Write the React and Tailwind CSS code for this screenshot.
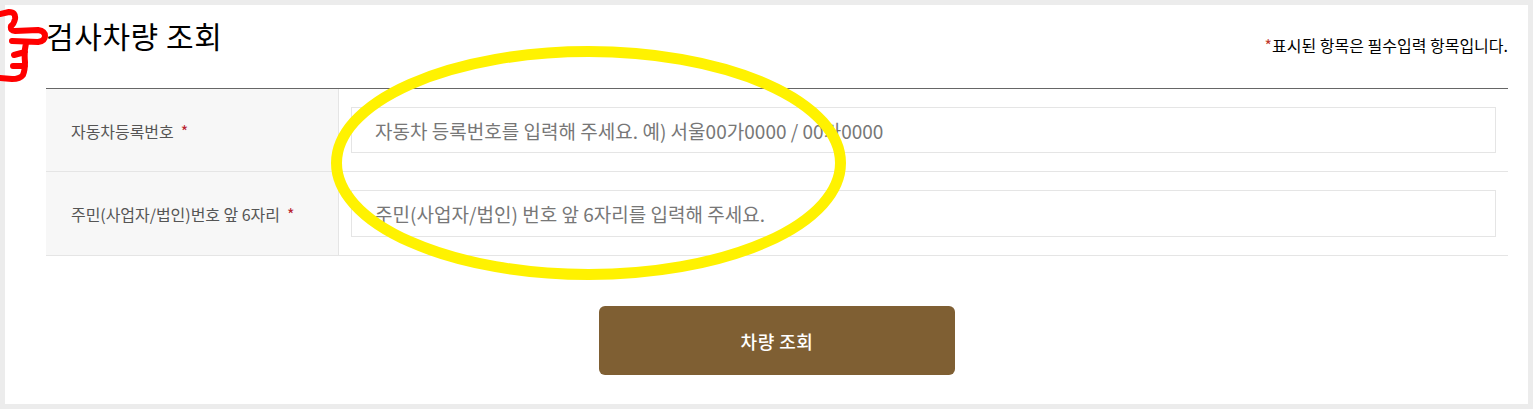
export default function App() {
  const th = "w-[293px] shrink-0 bg-[#f7f7f7] border-r border-[#e5e5e5] flex items-center pl-[25px] pt-[1px] text-[16px] text-[#555] tracking-[-0.05px]";
  const input = "w-full h-full border border-[#e5e5e5] bg-white pl-[23px] text-[19px] tracking-[0.02px] text-[#777] placeholder:text-[#777] outline-none";
  return (
    <div className="relative w-[1533px] h-[409px] overflow-hidden bg-[#ececec] p-[5px] font-['Noto_Sans_CJK_KR','Noto_Sans',sans-serif]">
      <div className="h-[399px] bg-white pl-[41px] pr-[20px]">
        <div className="flex justify-between h-[83px]">
          <h1 className="mt-[11px] text-[30px] leading-[38px] font-normal text-black tracking-[0.6px]">검사차량 조회</h1>
          <p className="mt-[30px] text-[16px] leading-[20px] text-black"><span className="text-[#c0392b]">*</span>표시된 항목은 필수입력 항목입니다.</p>
        </div>
        <div className="border-t border-[#666]">
          <div className="flex h-[83px] border-b border-[#e5e5e5]">
            <div className={th}>자동차등록번호<span className="ml-[7px] text-[#b8232f]">*</span></div>
            <div className="flex-1 pl-[12px] pr-[12px] pt-[18px] pb-[18px]">
              <input className={input} placeholder="자동차 등록번호를 입력해 주세요. 예) 서울00가0000 / 00가0000" readOnly />
            </div>
          </div>
          <div className="flex h-[84px] border-b border-[#e5e5e5]">
            <div className={th}>주민(사업자/법인)번호 앞 6자리<span className="ml-[7px] text-[#b8232f]">*</span></div>
            <div className="flex-1 pl-[12px] pr-[12px] pt-[18px] pb-[18px]">
              <input className={input} placeholder="주민(사업자/법인) 번호 앞 6자리를 입력해 주세요." readOnly />
            </div>
          </div>
        </div>
        <div className="flex justify-center mt-[50px]">
          <button className="w-[356px] h-[69px] pt-[1px] rounded-[6px] bg-[#7f5f33] text-white text-[18px] tracking-[0.5px] font-medium">차량 조회</button>
        </div>
      </div>
      <svg className="absolute left-0 top-0 pointer-events-none" width="1533" height="409" fill="none">
        <ellipse cx="588.5" cy="163" rx="252" ry="111.5" stroke="#fff200" strokeWidth="11" />
        <path d="M0 14 L9 12 Q16 12 15 19 Q14 24 11 26 Q10 31 15 31 L38 30 Q45 31 45 36 Q45 41 38 42 L12 41 M26 43 Q24 52 25 62 Q25 70 23 75 Q20 79 12 79 L0 78 M25 52 L14 55 M25 66 L13 66" stroke="#f00" strokeWidth="6" strokeLinecap="round" strokeLinejoin="round" />
      </svg>
    </div>
  );
}
